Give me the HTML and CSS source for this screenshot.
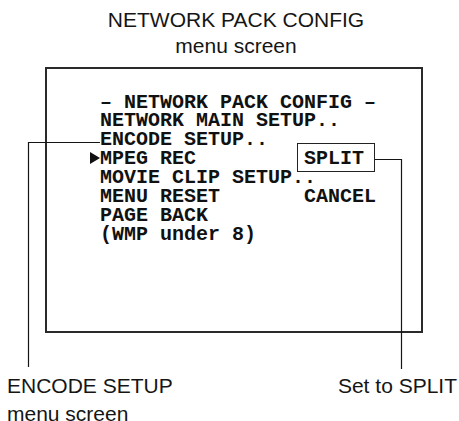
FILE: index.html
```html
<!DOCTYPE html>
<html lang="en">

<head>
    <meta charset="UTF-8">
    <meta name="viewport" content="width=device-width, initial-scale=1.0">
    <title>NETWORK PACK CONFIG menu screen</title>

    <link rel="stylesheet" href="styles.css">
</head>

<body>
    <div class="page">
        <header class="caption">
            <div>NETWORK PACK CONFIG</div>
            <div>menu screen</div>
        </header>

        <div class="screen">
            <ul class="menu">
                <li><span class="mark"></span><span class="text">– NETWORK PACK CONFIG –</span></li>
                <li><span class="mark"></span><span class="text">NETWORK MAIN SETUP..</span></li>
                <li><span class="mark"></span><span class="text">ENCODE SETUP..</span></li>
                <li><span class="mark active"></span><span class="text">MPEG REC         <span class="boxed">SPLIT</span></span></li>
                <li><span class="mark"></span><span class="text">MOVIE CLIP SETUP..</span></li>
                <li><span class="mark"></span><span class="text">MENU RESET       CANCEL</span></li>
                <li><span class="mark"></span><span class="text">PAGE BACK</span></li>
                <li><span class="mark"></span><span class="text">(WMP under 8)</span></li>
            </ul>
        </div>

        <div class="notes">
            <div>ENCODE SETUP<br>menu screen</div>
            <div>Set to SPLIT</div>
        </div>

        <!-- leader lines from the labels to the screen -->
        <svg class="leaders" width="459" height="421" viewBox="0 0 459 421">
            <polyline points="100,142.5 28.5,142.5 28.5,367" />
            <polyline points="375,159.5 401.5,159.5 401.5,369" />
        </svg>
    </div>
</body>

</html>
```

FILE: styles.css
```css
body {
    margin: 0;
    font-family: "Liberation Sans", Arial, sans-serif;
    color: #151515;
    background-color: #fff;
}

.page {
    position: relative;
    width: 459px;
    height: 421px;
    overflow: hidden;
}

.caption {
    padding-top: 7px;
    padding-left: 13px;
    text-align: center;
    font-size: 21px;
    line-height: 26px;
}

.screen {
    box-sizing: border-box;
    width: 378px;
    height: 266px;
    margin: 8px 0 0 45px;
    padding: 24.6px 0 0 41px;
    border: 2px solid #2a2a2a;
}

.menu {
    list-style: none;
    margin: 0;
    padding: 0;
    font-family: "Liberation Mono", "DejaVu Sans Mono", monospace;
    font-weight: bold;
    font-size: 20px;
    line-height: 18.85px;
    color: #111;
}

.menu li {
    display: flex;
}

.mark {
    position: relative;
    flex: none;
    width: 12px;
}

.mark.active::before {
    content: "";
    position: absolute;
    left: 2px;
    top: 1.5px;
    border-left: 10px solid #111;
    border-top: 6px solid transparent;
    border-bottom: 6px solid transparent;
}

.text {
    white-space: pre;
}

.boxed {
    position: relative;
}

.boxed::before {
    content: "";
    position: absolute;
    top: -4.5px;
    bottom: -1.5px;
    left: -7px;
    right: -11px;
    border: 1.5px solid #222;
}

.notes {
    display: flex;
    justify-content: space-between;
    align-items: flex-start;
    margin-top: 38.7px;
    padding: 0 2px 0 7px;
    font-size: 21px;
    line-height: 28px;
}

.leaders {
    position: absolute;
    top: 0;
    left: 0;
    fill: none;
    stroke: #151515;
    stroke-width: 1.2;
}
```
